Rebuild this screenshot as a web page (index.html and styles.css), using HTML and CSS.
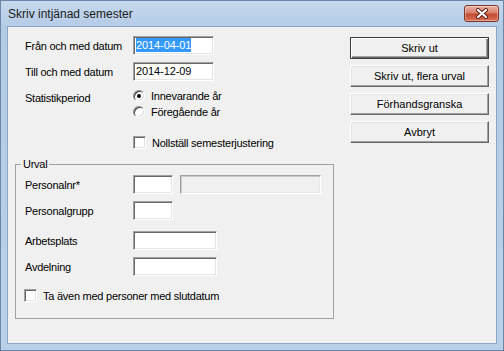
FILE: index.html
```html
<!DOCTYPE html>
<html lang="sv">
<head>
    <meta charset="UTF-8">
    <meta name="viewport" content="width=device-width, initial-scale=1.0">
    <title>Skriv intjänad semester</title>
    <link rel="stylesheet" href="styles.css">
</head>
<body>
    <div class="window">
        <div class="titlebar">
            <span class="title">Skriv intjänad semester</span>
            <button class="close" aria-label="Stäng">
                <svg width="14" height="11" viewBox="0 0 14 11">
                    <path d="M3 2 L11 9 M11 2 L3 9" stroke="#5a1a12" stroke-width="4" stroke-linecap="round"/>
                    <path d="M3 2 L11 9 M11 2 L3 9" stroke="#fff" stroke-width="2.2" stroke-linecap="round"/>
                </svg>
            </button>
        </div>

        <div class="client">
            <div class="form">
                <div class="row">
                    <span class="lbl">Från och med datum</span>
                    <div class="edit w-date"><span class="sel">2014-04-01</span></div>
                </div>
                <div class="row">
                    <span class="lbl">Till och med datum</span>
                    <div class="edit w-date">2014-12-09</div>
                </div>

                <div class="period">
                    <span class="lbl period-lbl">Statistikperiod</span>
                    <div class="radios">
                        <div class="opt"><span class="radio checked"></span>Innevarande år</div>
                        <div class="opt"><span class="radio"></span>Föregående år</div>
                    </div>
                </div>

                <div class="check-row reset">
                    <span class="check"></span>Nollställ semesterjustering
                </div>

                <fieldset class="group">
                    <legend>Urval</legend>
                    <div class="row">
                        <span class="lbl">Personalnr*</span>
                        <div class="edit w-small"></div>
                        <div class="edit disabled w-name"></div>
                    </div>
                    <div class="row">
                        <span class="lbl">Personalgrupp</span>
                        <div class="edit w-small"></div>
                    </div>
                    <div class="row spaced">
                        <span class="lbl">Arbetsplats</span>
                        <div class="edit w-place"></div>
                    </div>
                    <div class="row">
                        <span class="lbl">Avdelning</span>
                        <div class="edit w-place"></div>
                    </div>
                    <div class="check-row ended">
                        <span class="check"></span>Ta även med personer med slutdatum
                    </div>
                </fieldset>
            </div>

            <div class="buttons">
                <button class="btn default">Skriv ut</button>
                <button class="btn">Skriv ut, flera urval</button>
                <button class="btn">Förhandsgranska</button>
                <button class="btn">Avbryt</button>
            </div>
        </div>
    </div>
</body>
</html>
```

FILE: styles.css
```css
* {
    box-sizing: border-box;
}

body {
    margin: 0;
    font-family: 'Liberation Sans', Arial, sans-serif;
    font-size: 11px;
    letter-spacing: -0.25px;
    color: #000;
}

/* window frame */
.window {
    width: 504px;
    height: 351px;
    border: 1px solid #6a87a8;
    background: linear-gradient(180deg, #c6d9ee 0, #b4cbe6 26px, #bad0ea 100%);
    display: flex;
    flex-direction: column;
}

.titlebar {
    height: 25px;
    display: flex;
    align-items: center;
    padding: 0 4px 0 7px;
}

.title {
    flex: 1;
    font-size: 12px;
    letter-spacing: 0;
    color: #1b1b1b;
}

.close {
    width: 35px;
    height: 17px;
    padding: 0;
    border: 1px solid #80372a;
    border-radius: 3px;
    background: linear-gradient(180deg, #eab2a3 0, #d8806b 45%, #c54a32 55%, #d6745a 100%);
    box-shadow: inset 0 0 0 1px rgba(255,255,255,0.35);
    display: flex;
    align-items: center;
    justify-content: center;
}

.client {
    flex: 1;
    margin: 0 6px 6px;
    border: 1px solid #8ca6c6;
    background: #f0f0f0;
    display: flex;
    padding-top: 9px;
}

.form {
    width: 342px;
    padding-left: 17px;
}

/* rows */
.row {
    display: flex;
    align-items: center;
    height: 19px;
}

.row + .row {
    margin-top: 7px;
}

.row.spaced {
    margin-top: 11px;
}

.lbl {
    width: 108px;
    flex: none;
}

.edit {
    height: 19px;
    padding: 0 2px;
    line-height: 17px;
    background: #fff;
    border: 1px solid;
    border-color: #a0a0a0 #fff #fff #a0a0a0;
    box-shadow: inset 1px 1px #696969, inset -1px -1px #e3e3e3;
    font-size: 11px;
    letter-spacing: -0.1px;
}

.edit.disabled {
    background: #f0f0f0;
    box-shadow: inset 1px 1px #c8c8c8, inset -1px -1px #e8e8e8;
    margin-left: 7px;
}

.sel {
    background: #3399ff;
    color: #fff;
    padding: 1px 0;
}

.w-date { width: 81px; }
.w-small { width: 40px; }
.w-name { width: 141px; }
.w-place { width: 84px; }

/* radio group */
.period {
    display: flex;
    margin-top: 7px;
}

.period-lbl {
    padding-top: 3px;
    line-height: 14px;
}

.opt {
    height: 16px;
    display: flex;
    align-items: center;
    gap: 6px;
}

.radio {
    width: 12px;
    height: 12px;
    border-radius: 50%;
    background: #fff;
    border: 1px solid;
    border-color: #8a8a8a #fff #fff #8a8a8a;
    box-shadow: inset 1px 1px #404040, inset -1px -1px #d8d8d8;
    display: flex;
    align-items: center;
    justify-content: center;
}

.radio.checked::after {
    content: '';
    width: 4px;
    height: 4px;
    border-radius: 50%;
    background: #000;
}

/* checkboxes */
.check-row {
    display: flex;
    align-items: center;
    gap: 6px;
    height: 13px;
}

.check-row.reset {
    margin-top: 16px;
    padding-left: 108px;
}

.check-row.ended {
    margin-top: 13px;
    margin-left: -1px;
}

.check {
    width: 13px;
    height: 13px;
    background: #fff;
    border: 1px solid;
    border-color: #a0a0a0 #fff #fff #a0a0a0;
    box-shadow: inset 1px 1px #696969, inset -1px -1px #e3e3e3;
}

/* group box */
.group {
    margin: 8px 0 0 -10px;
    width: 319px;
    min-width: 0;
    border: 1px solid #a0a0a0;
    padding: 4px 9px 16px 9px;
}

.group legend {
    padding: 0 2px;
    margin-left: -4px;
    line-height: 14px;
}

/* buttons */
.buttons {
    width: 139px;
    padding-top: 1px;
    display: flex;
    flex-direction: column;
    gap: 6px;
}

.btn {
    height: 22px;
    width: 139px;
    padding: 0;
    font: inherit;
    color: #000;
    background: #f0f0f0;
    border: 1px solid;
    border-color: #fff #696969 #696969 #fff;
    box-shadow: inset -1px -1px #a0a0a0, inset 1px 1px #e3e3e3;
}

.btn.default {
    border-color: #3c3c3c;
    box-shadow: inset 1px 1px #fff, inset -1px -1px #696969, inset -2px -2px #a0a0a0;
}
```
